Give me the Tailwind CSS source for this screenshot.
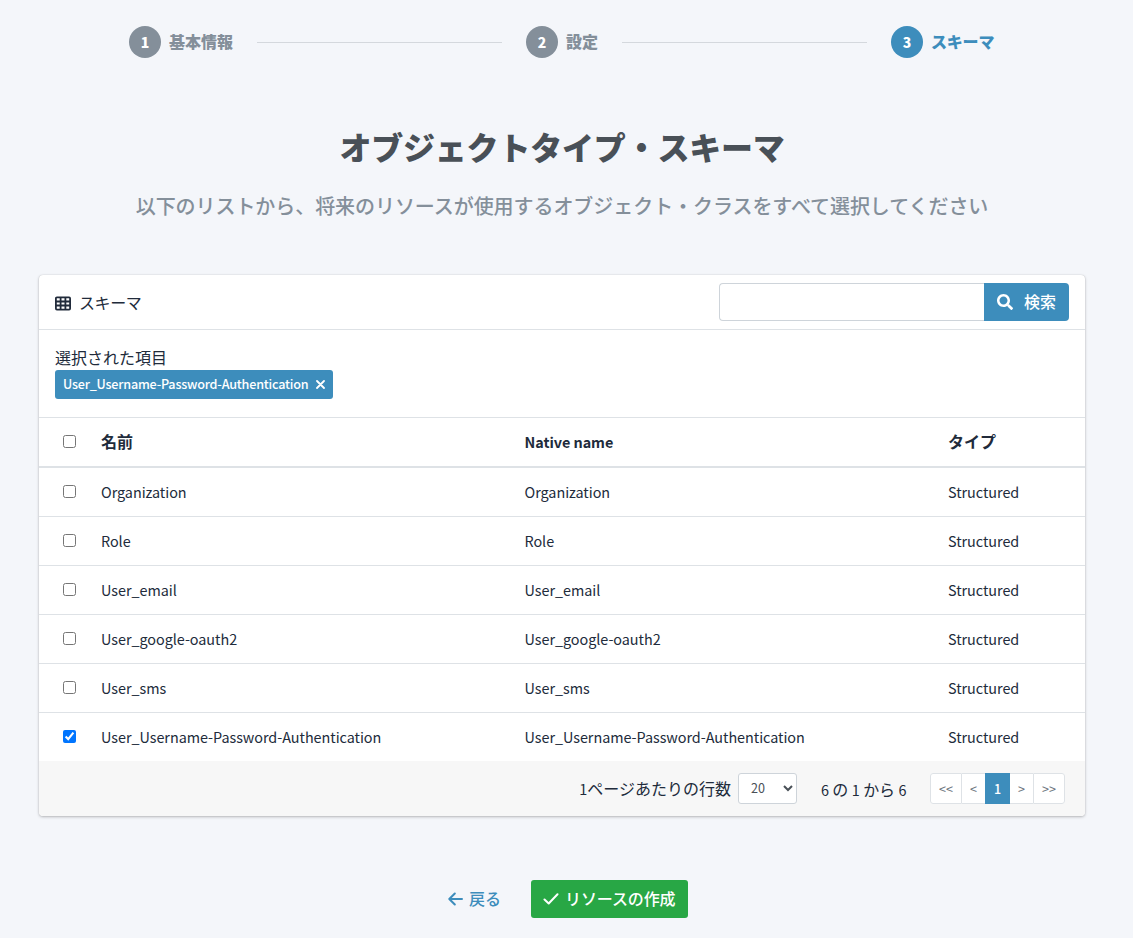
<!DOCTYPE html>
<html lang="ja">
<head>
  <meta charset="UTF-8" />
  <meta name="viewport" content="width=device-width, initial-scale=1.0"/>
  <title>オブジェクトタイプ・スキーマ</title>
  <script src="https://cdn.jsdelivr.net/npm/@tailwindcss/browser@4"></script>
  <style>
    body {
      font-family: 'Noto Sans CJK JP', sans-serif;
    }
  </style>
</head>
<body class="h-[938px] overflow-hidden bg-[#f4f6fa] pl-[39px] pr-12 text-[#212b3b] text-base">

  <!-- Steps -->
  <div class="h-[84px] pl-[90px] flex items-center font-black text-[#848f9a]">
    <div class="w-8 h-8 rounded-full bg-[#848f9a] text-white text-sm flex items-center justify-center">1</div>
    <span class="ml-2 w-[65px] pb-0.5 whitespace-nowrap">基本情報</span>
    <div class="ml-[23px] w-[245px] h-px bg-[#d4d8dd]"></div>
    <div class="ml-6 w-8 h-8 rounded-full bg-[#848f9a] text-white text-sm flex items-center justify-center">2</div>
    <span class="ml-2 w-8 pb-0.5 whitespace-nowrap">設定</span>
    <div class="ml-6 w-[245px] h-px bg-[#d4d8dd]"></div>
    <div class="ml-6 w-8 h-8 rounded-full bg-[#3d8dbc] text-white text-sm flex items-center justify-center">3</div>
    <span class="ml-2 pb-0.5 whitespace-nowrap tracking-[-0.2px] text-[#3d8dbc]">スキーマ</span>
  </div>

  <h1 class="mt-[38px] text-center text-[32px] leading-12 tracking-[-0.2px] font-black text-[#495057]">オブジェクトタイプ・スキーマ</h1>
  <p class="mt-[21px] text-center text-xl leading-[30px] tracking-[-0.06px] font-medium whitespace-nowrap text-[#848f9a]">以下のリストから、将来のリソースが使用するオブジェクト・クラスをすべて選択してください</p>

  <div class="mt-[54px] h-[541px] rounded-sm bg-white shadow-[0_0_1px_rgba(0,0,0,0.2),0_1px_3px_rgba(0,0,0,0.25)] overflow-hidden">
    <div class="h-[55px] px-4 border-b border-[#dee2e6] flex items-center">
      <svg class="w-4 h-[15px] mt-0.5" viewBox="0 0 16 15" fill="none" stroke="currentColor" stroke-width="1.8"><rect x="0.9" y="1.4" width="14.2" height="12.2" rx="1"/><path d="M1 5.500h14M1 9.500h14M5.600 1.500v12M10.400 1.500v12"/></svg>
      <span class="ml-2 tracking-[-0.4px]">スキーマ</span>
      <div class="ml-auto flex h-[38px]">
        <input type="text" class="w-[265px] border border-r-0 border-[#ced4da] rounded-l-sm bg-white px-3">
        <button class="w-[85px] rounded-r-sm bg-[#3d8dbc] text-white font-medium flex items-center pl-[13px]">
          <svg class="w-4 h-4" viewBox="0 0 512 512" fill="currentColor"><path d="M505 442.700L405.300 343c-4.500-4.500-10.600-7-17-7H372c27.600-35.300 44-79.700 44-128C416 93.100 322.900 0 208 0S0 93.100 0 208s93.100 208 208 208c48.300 0 92.700-16.400 128-44v16.300c0 6.400 2.500 12.500 7 17l99.700 99.700c9.400 9.400 24.600 9.400 33.900 0l28.300-28.300c9.400-9.400 9.400-24.600.1-34zM208 336c-70.700 0-128-57.200-128-128 0-70.700 57.200-128 128-128 70.700 0 128 57.200 128 128 0 70.700-57.200 128-128 128z"/></svg>
          <span class="ml-[11px] pb-0.5">検索</span>
        </button>
      </div>
    </div>

    <div class="h-[87px] px-4 pt-[15px]">
      <div class="mb-px leading-6">選択された項目</div>
      <span class="flex w-[278px] h-[29px] px-2 rounded-[3px] bg-[#3d8dbc] text-white text-[12.6px] tracking-[-0.2px] font-medium items-center whitespace-nowrap">User_Username-Password-Authentication
        <svg class="ml-auto w-[9px] h-[9px]" viewBox="0 0 9 9" stroke="currentColor" stroke-width="1.8" stroke-linecap="round"><path d="M1 1l7 7M8 1l-7 7"/></svg>
      </span>
    </div>

    <table class="w-full table-fixed border-separate border-spacing-0 text-left text-[14.4px] tracking-[-0.04px]">
      <colgroup><col class="w-[62px]"><col class="w-[423.5px]"><col class="w-[423.5px]"><col></colgroup>
      <thead>
        <tr class="h-[51px] *:border-t *:border-b-2 *:border-[#dee2e6] font-bold">
          <th class="pl-6"><input type="checkbox" class="block mb-px w-[13px] h-[13px]"></th>
          <th class="pb-0.5 text-base">名前</th><th>Native name</th><th class="pb-0.5 text-base">タイプ</th>
        </tr>
      </thead>
      <tbody>
        <tr class="h-12"><td class="pl-6"><input type="checkbox" class="block mb-px w-[13px] h-[13px]"></td><td>Organization</td><td>Organization</td><td>Structured</td></tr>
        <tr class="h-[49px] *:border-t *:border-[#dee2e6]"><td class="pl-6"><input type="checkbox" class="block mb-px w-[13px] h-[13px]"></td><td>Role</td><td>Role</td><td>Structured</td></tr>
        <tr class="h-[49px] *:border-t *:border-[#dee2e6]"><td class="pl-6"><input type="checkbox" class="block mb-px w-[13px] h-[13px]"></td><td>User_email</td><td>User_email</td><td>Structured</td></tr>
        <tr class="h-[49px] *:border-t *:border-[#dee2e6]"><td class="pl-6"><input type="checkbox" class="block mb-px w-[13px] h-[13px]"></td><td>User_google-oauth2</td><td>User_google-oauth2</td><td>Structured</td></tr>
        <tr class="h-[49px] *:border-t *:border-[#dee2e6]"><td class="pl-6"><input type="checkbox" class="block mb-px w-[13px] h-[13px]"></td><td>User_sms</td><td>User_sms</td><td>Structured</td></tr>
        <tr class="h-[49px] *:border-t *:border-[#dee2e6]"><td class="pl-6"><input type="checkbox" checked class="block mb-px w-[13px] h-[13px] accent-[#0075ff]"></td><td>User_Username-Password-Authentication</td><td>User_Username-Password-Authentication</td><td>Structured</td></tr>
      </tbody>
    </table>

    <div class="h-[55px] pr-5 bg-[#f7f7f7] flex items-center justify-end">
      <span class="pb-0.5 whitespace-nowrap"><span class="text-[14.4px]">1</span>ページあたりの行数</span>
      <div class="ml-[7px] w-[59px] h-[31px] pl-3 pr-[3px] rounded-[3px] border border-[#ced4da] bg-white text-[#495057] text-[12.6px] flex items-center justify-between">
        20
        <svg class="w-[10px] h-[7px]" viewBox="0 0 10 7" fill="none" stroke="currentColor" stroke-width="2"><path d="M1 1l4 4 4-4"/></svg>
      </div>
      <span class="ml-6 w-[86px] whitespace-nowrap tracking-[-0.1px]"><span class="text-[14.4px]">6</span> の <span class="text-[14.4px]">1</span> から <span class="text-[14.4px]">6</span></span>
      <div class="ml-[23px] flex h-[31px] rounded-[3px] bg-white text-[12.6px] text-[#6c757d] text-center leading-[29px]">
        <span class="w-8 border border-[#dee2e6] rounded-l-[3px]">&lt;&lt;</span>
        <span class="w-[23px] border-y border-[#dee2e6]">&lt;</span>
        <span class="w-[25px] border-y border-[#3d8dbc] bg-[#3d8dbc] text-white font-medium">1</span>
        <span class="w-[23px] border-y border-[#dee2e6]">&gt;</span>
        <span class="w-8 border border-[#dee2e6] rounded-r-[3px]">&gt;&gt;</span>
      </div>
    </div>
  </div>

  <div class="mt-16 pl-[409px] flex items-center font-medium">
    <svg class="w-[15px] h-[14px] text-[#3d8dbc]" viewBox="0 0 15 14" fill="none" stroke="currentColor" stroke-width="2" stroke-linecap="round" stroke-linejoin="round"><path d="M14 7H1.500M6.800 1.500L1.300 7l5.500 5.500"/></svg>
    <a href="#" class="ml-1.5 w-8 pb-0.5 whitespace-nowrap text-[#3d8dbc]">戻る</a>
    <button class="ml-[30px] w-[157px] h-[38px] pl-3 rounded-[3px] bg-[#28a745] text-white flex items-center whitespace-nowrap">
      <svg class="w-4 h-3" viewBox="0 0 16 12" fill="none" stroke="currentColor" stroke-width="2" stroke-linecap="round" stroke-linejoin="round"><path d="M1.500 6.500l4.200 4L14.500 1.300"/></svg>
      <span class="ml-1.5 pb-0.5 tracking-[-0.1px]">リソースの作成</span>
    </button>
  </div>
</body>
</html>
